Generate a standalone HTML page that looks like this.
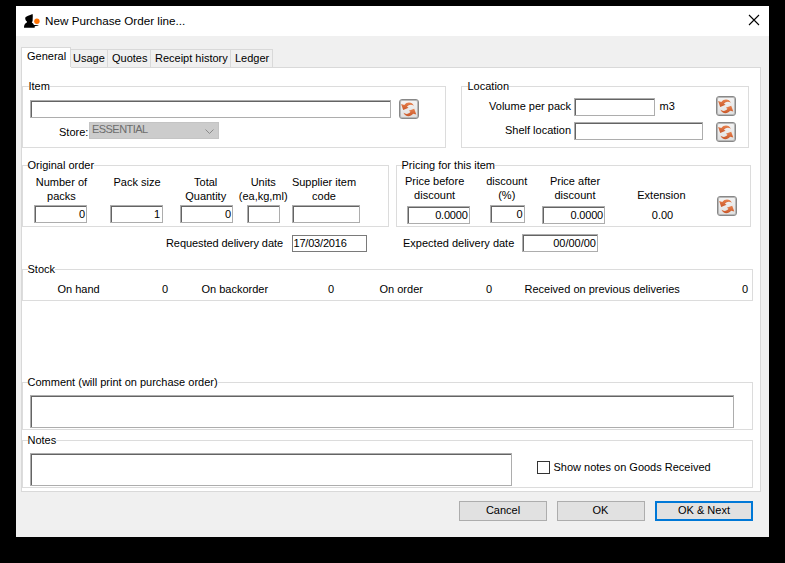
<!DOCTYPE html>
<html><head><meta charset="utf-8"><style>
html,body{margin:0;padding:0;}
body{width:785px;height:563px;background:#000;position:relative;overflow:hidden;font-family:'Liberation Sans', sans-serif;}
.t{position:absolute;font-size:11px;line-height:13px;white-space:nowrap;color:#000;}
.gb{position:absolute;box-sizing:border-box;border:1px solid #dcdcdc;}
.gl{background:#fff;padding:0;}
.sk{position:absolute;box-sizing:border-box;background:#fff;border:1px solid #adadad;box-shadow:inset 1px 1px 0 #646464;}
.fl{position:absolute;box-sizing:border-box;background:#fff;border:1px solid #7a7a7a;}
.rb{position:absolute;width:20px;height:20px;box-sizing:border-box;border:1px solid #888;border-radius:3px;background:linear-gradient(#f4f4f4,#e0e0e0);box-shadow:inset 0 0 0 1px #b8b8b8;}
.rb svg{position:absolute;left:-1px;top:-1px;}
.btn{position:absolute;box-sizing:border-box;background:#e1e1e1;border:1px solid #adadad;}
</style></head><body>
<svg width="0" height="0" style="position:absolute"><defs>
<linearGradient id="rg1" x1="0" y1="0" x2="0" y2="1"><stop offset="0" stop-color="#e8824f"/><stop offset="1" stop-color="#c9582a"/></linearGradient>
<linearGradient id="rg2" x1="0" y1="1" x2="0" y2="0"><stop offset="0" stop-color="#e8824f"/><stop offset="1" stop-color="#c9582a"/></linearGradient>
</defs></svg>

<div style="position:absolute;left:16px;top:6px;width:753px;height:531px;background:#f0f0f0;"></div>
<div style="position:absolute;left:16px;top:6px;width:753px;height:30px;background:#fff;"></div>
<svg style="position:absolute;left:22px;top:12px" width="20" height="18" viewBox="0 0 20 18">
<path d="M3.2 6.0 C3.5 4.8 5.5 4.0 7.5 3.3 L10.6 1.9 L10.8 4.0 L10.6 9.0 L9.8 10.5 C10.8 11.0 11.5 12.0 12.0 13.0 L16.5 12.9 L16.3 13.6 L12.8 14.3 L12.6 15.8 L2.0 15.8 C2.0 13.5 2.5 11.5 4.6 10.8 L5.0 9.6 C4.0 9.0 3.2 8.0 3.2 6.0 Z" fill="#000"/>
<circle cx="14.9" cy="9.3" r="2.7" fill="#ff7000"/>
</svg>
<div class="t" style="left:45px;top:14px;font-size:11.7px;line-height:14px;top:14px;">New Purchase Order line...</div>
<svg style="position:absolute;left:748px;top:14px" width="12" height="12" viewBox="0 0 12 12"><path d="M1 1 L11 11 M11 1 L1 11" stroke="#000" stroke-width="1.1"/></svg>
<div class="gb" style="left:21px;top:67px;width:740px;height:425px;background:#fff;border-color:#d9d9d9;"></div>
<div class="gb" style="left:70px;top:49px;width:38px;height:19px;background:#f0f0f0;border-color:#d9d9d9;"></div>
<div class="t" style="left:73px;top:52px;">Usage</div>
<div class="gb" style="left:107px;top:49px;width:44px;height:19px;background:#f0f0f0;border-color:#d9d9d9;"></div>
<div class="t" style="left:112px;top:52px;">Quotes</div>
<div class="gb" style="left:150px;top:49px;width:81px;height:19px;background:#f0f0f0;border-color:#d9d9d9;"></div>
<div class="t" style="left:155px;top:52px;">Receipt history</div>
<div class="gb" style="left:230px;top:49px;width:43px;height:19px;background:#f0f0f0;border-color:#d9d9d9;"></div>
<div class="t" style="left:235px;top:52px;">Ledger</div>
<div style="position:absolute;left:21px;top:47px;width:50px;height:20px;box-sizing:border-box;background:#fff;border:1px solid #d9d9d9;border-bottom:none;"></div>
<div style="position:absolute;left:22px;top:67px;width:49px;height:1px;background:#fff;"></div>
<div class="t" style="left:27px;top:50px;">General</div>
<div class="gb" style="left:22px;top:86px;width:424px;height:62px;"></div>
<div class="t gl" style="left:28.5px;top:80px;">Item</div>
<div class="sk" style="left:30px;top:100px;width:361px;height:18px;"></div>
<div class="rb" style="left:399px;top:99px;"><svg width="20" height="20" viewBox="0 0 20 20"><g transform="translate(9.7 10.3) scale(1) translate(-9.7 -10.3)"><path d="M14.9 6.8 C13.4 2.7 7.8 2.3 5.3 5.9 L2.1 5.0 L4.2 10.9 L9.6 8.8 L7.9 7.8 C9.8 5.3 12.6 5.1 14.9 6.8 Z" fill="url(#rg1)"/><path transform="rotate(180 9.7 10.3)" d="M14.9 6.8 C13.4 2.7 7.8 2.3 5.3 5.9 L2.1 5.0 L4.2 10.9 L9.6 8.8 L7.9 7.8 C9.8 5.3 12.6 5.1 14.9 6.8 Z" fill="url(#rg2)"/></g></svg></div>
<div class="t" style="left:59px;top:126px;">Store:</div>
<div style="position:absolute;left:89px;top:122px;width:130px;height:17px;box-sizing:border-box;background:#cccccc;border:1px solid #c4c4c4;"></div>
<div class="t" style="left:92px;top:123px;color:#6d6d6d;letter-spacing:-0.55px;">ESSENTIAL</div>
<svg style="position:absolute;left:204.5px;top:128.5px" width="9" height="5" viewBox="0 0 9 5"><path d="M0.5 0.5 L4.5 4.5 L8.5 0.5" stroke="#8a8a8a" fill="none" stroke-width="1"/></svg>
<div class="gb" style="left:461px;top:86px;width:288px;height:62px;"></div>
<div class="t gl" style="left:467.5px;top:80px;">Location</div>
<div class="t" style="left:371px;top:100px;width:200px;text-align:right;">Volume per pack</div>
<div class="sk" style="left:574px;top:98px;width:81px;height:18px;"></div>
<div class="t" style="left:659.5px;top:100px;">m3</div>
<div class="rb" style="left:716px;top:96px;"><svg width="20" height="20" viewBox="0 0 20 20"><g transform="translate(9.7 10.3) scale(1) translate(-9.7 -10.3)"><path d="M14.9 6.8 C13.4 2.7 7.8 2.3 5.3 5.9 L2.1 5.0 L4.2 10.9 L9.6 8.8 L7.9 7.8 C9.8 5.3 12.6 5.1 14.9 6.8 Z" fill="url(#rg1)"/><path transform="rotate(180 9.7 10.3)" d="M14.9 6.8 C13.4 2.7 7.8 2.3 5.3 5.9 L2.1 5.0 L4.2 10.9 L9.6 8.8 L7.9 7.8 C9.8 5.3 12.6 5.1 14.9 6.8 Z" fill="url(#rg2)"/></g></svg></div>
<div class="t" style="left:371px;top:124px;width:200px;text-align:right;">Shelf location</div>
<div class="sk" style="left:574px;top:122px;width:129px;height:18px;"></div>
<div class="rb" style="left:716px;top:122px;"><svg width="20" height="20" viewBox="0 0 20 20"><g transform="translate(9.7 10.3) scale(1) translate(-9.7 -10.3)"><path d="M14.9 6.8 C13.4 2.7 7.8 2.3 5.3 5.9 L2.1 5.0 L4.2 10.9 L9.6 8.8 L7.9 7.8 C9.8 5.3 12.6 5.1 14.9 6.8 Z" fill="url(#rg1)"/><path transform="rotate(180 9.7 10.3)" d="M14.9 6.8 C13.4 2.7 7.8 2.3 5.3 5.9 L2.1 5.0 L4.2 10.9 L9.6 8.8 L7.9 7.8 C9.8 5.3 12.6 5.1 14.9 6.8 Z" fill="url(#rg2)"/></g></svg></div>
<div class="gb" style="left:22px;top:165px;width:367px;height:62px;"></div>
<div class="t gl" style="left:27.5px;top:159px;">Original order</div>
<div class="t" style="left:-38.6px;top:176px;width:200px;text-align:center;">Number of</div>
<div class="t" style="left:-38.6px;top:190px;width:200px;text-align:center;">packs</div>
<div class="t" style="left:37.0px;top:176px;width:200px;text-align:center;">Pack size</div>
<div class="t" style="left:105.69999999999999px;top:176px;width:200px;text-align:center;">Total</div>
<div class="t" style="left:105.69999999999999px;top:190px;width:200px;text-align:center;">Quantity</div>
<div class="t" style="left:163.2px;top:176px;width:200px;text-align:center;">Units</div>
<div class="t" style="left:163.2px;top:190px;width:200px;text-align:center;">(ea,kg,ml)</div>
<div class="t" style="left:224.0px;top:176px;width:200px;text-align:center;">Supplier item</div>
<div class="t" style="left:224.0px;top:190px;width:200px;text-align:center;">code</div>
<div class="sk" style="left:34px;top:205px;width:53px;height:18px;"></div>
<div class="t" style="left:-115px;top:208px;width:200px;text-align:right;">0</div>
<div class="sk" style="left:110px;top:205px;width:53px;height:18px;"></div>
<div class="t" style="left:-40px;top:208px;width:200px;text-align:right;">1</div>
<div class="sk" style="left:180px;top:205px;width:53px;height:18px;"></div>
<div class="t" style="left:31px;top:208px;width:200px;text-align:right;">0</div>
<div class="sk" style="left:247px;top:205px;width:33px;height:18px;"></div>
<div class="sk" style="left:292px;top:205px;width:68px;height:18px;"></div>
<div class="gb" style="left:396px;top:165px;width:355px;height:62px;"></div>
<div class="t gl" style="left:401.5px;top:159px;">Pricing for this item</div>
<div class="t" style="left:334.6px;top:175px;width:200px;text-align:center;">Price before</div>
<div class="t" style="left:334.6px;top:189px;width:200px;text-align:center;">discount</div>
<div class="t" style="left:406.75px;top:175px;width:200px;text-align:center;">discount</div>
<div class="t" style="left:406.75px;top:189px;width:200px;text-align:center;">(%)</div>
<div class="t" style="left:475.0px;top:175px;width:200px;text-align:center;">Price after</div>
<div class="t" style="left:475.0px;top:189px;width:200px;text-align:center;">discount</div>
<div class="t" style="left:561.4px;top:189px;width:200px;text-align:center;">Extension</div>
<div class="sk" style="left:407px;top:206px;width:63px;height:18px;"></div>
<div class="t" style="left:267.6px;top:209px;width:200px;text-align:right;letter-spacing:-0.2px;">0.0000</div>
<div class="sk" style="left:490px;top:205px;width:35px;height:18px;"></div>
<div class="t" style="left:322.5px;top:208px;width:200px;text-align:right;">0</div>
<div class="sk" style="left:542px;top:206px;width:63px;height:18px;"></div>
<div class="t" style="left:403px;top:209px;width:200px;text-align:right;letter-spacing:-0.2px;">0.0000</div>
<div class="t" style="left:562.5px;top:209px;width:200px;text-align:center;">0.00</div>
<div class="rb" style="left:717px;top:196px;"><svg width="20" height="20" viewBox="0 0 20 20"><g transform="translate(9.7 10.3) scale(1) translate(-9.7 -10.3)"><path d="M14.9 6.8 C13.4 2.7 7.8 2.3 5.3 5.9 L2.1 5.0 L4.2 10.9 L9.6 8.8 L7.9 7.8 C9.8 5.3 12.6 5.1 14.9 6.8 Z" fill="url(#rg1)"/><path transform="rotate(180 9.7 10.3)" d="M14.9 6.8 C13.4 2.7 7.8 2.3 5.3 5.9 L2.1 5.0 L4.2 10.9 L9.6 8.8 L7.9 7.8 C9.8 5.3 12.6 5.1 14.9 6.8 Z" fill="url(#rg2)"/></g></svg></div>
<div class="t" style="left:83px;top:237px;width:200px;text-align:right;letter-spacing:-0.07px;">Requested delivery date</div>
<div class="fl" style="left:292px;top:235px;width:75px;height:17px;"></div>
<div class="t" style="left:293.5px;top:237px;letter-spacing:-0.2px;">17/03/2016</div>
<div class="t" style="left:403px;top:237px;">Expected delivery date</div>
<div class="sk" style="left:522px;top:234px;width:76px;height:18px;"></div>
<div class="t" style="left:396px;top:237px;width:200px;text-align:right;">00/00/00</div>
<div class="gb" style="left:22px;top:269px;width:731px;height:32px;"></div>
<div class="t gl" style="left:27.5px;top:263px;">Stock</div>
<div class="t" style="left:57.5px;top:283px;">On hand</div>
<div class="t" style="left:-32px;top:283px;width:200px;text-align:right;">0</div>
<div class="t" style="left:201.5px;top:283px;">On backorder</div>
<div class="t" style="left:134px;top:283px;width:200px;text-align:right;">0</div>
<div class="t" style="left:379.5px;top:283px;">On order</div>
<div class="t" style="left:292px;top:283px;width:200px;text-align:right;">0</div>
<div class="t" style="left:524.5px;top:283px;">Received on previous deliveries</div>
<div class="t" style="left:548px;top:283px;width:200px;text-align:right;">0</div>
<div class="gb" style="left:22px;top:382px;width:731px;height:48px;"></div>
<div class="t gl" style="left:27.5px;top:376px;">Comment (will print on purchase order)</div>
<div class="sk" style="left:30px;top:395px;width:704px;height:33px;"></div>
<div class="gb" style="left:22px;top:440px;width:731px;height:48px;"></div>
<div class="t gl" style="left:27.5px;top:434px;">Notes</div>
<div class="sk" style="left:30px;top:453px;width:482px;height:33px;"></div>
<div style="position:absolute;left:537px;top:461px;width:13px;height:13px;box-sizing:border-box;background:#fff;border:1px solid #333;"></div>
<div class="t" style="left:553.5px;top:461px;">Show notes on Goods Received</div>
<div class="btn" style="left:459px;top:501px;width:88px;height:20px;"></div>
<div class="t" style="left:403.0px;top:504px;width:200px;text-align:center;">Cancel</div>
<div class="btn" style="left:557px;top:501px;width:88px;height:20px;"></div>
<div class="t" style="left:500.5px;top:504px;width:200px;text-align:center;">OK</div>
<div class="btn" style="left:655px;top:501px;width:98px;height:20px;border:2px solid #0078d7;"></div>
<div class="t" style="left:604.0px;top:504px;width:200px;text-align:center;">OK &amp; Next</div>
</body></html>
